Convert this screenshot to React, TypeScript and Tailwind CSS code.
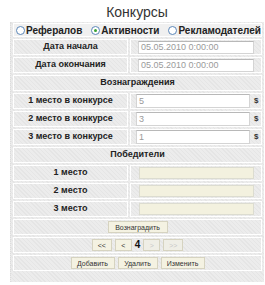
const hatch =
  "bg-[repeating-linear-gradient(45deg,#e5e5e5_0px,#e5e5e5_1px,#ececec_1px,#ececec_3px)]";

function Row({ children }: { children: React.ReactNode }) {
  return <div className="flex gap-[2px] h-[16px]">{children}</div>;
}

function LabelCell({ text }: { text: string }) {
  return (
    <div
      className={`w-[115px] border border-white flex items-center justify-center text-[9px] font-bold text-[#222] ${hatch}`}
    >
      {text}
    </div>
  );
}

function FullCell({ children, className = "" }: { children: React.ReactNode; className?: string }) {
  return (
    <div className={`flex-1 border border-white flex items-center justify-center ${hatch} ${className}`}>
      {children}
    </div>
  );
}

function Radio({ checked, label }: { checked?: boolean; label: string }) {
  return (
    <div className="flex items-center gap-[1px]">
      <span className="w-[9px] h-[9px] rounded-full border border-[#5b87b8] bg-white flex items-center justify-center">
        {checked && <span className="w-[3px] h-[3px] rounded-full bg-[#3aa335]" />}
      </span>
      <span>{label}</span>
    </div>
  );
}

function Btn({ text, w, dim }: { text: string; w: string; dim?: boolean }) {
  return (
    <div
      className={`${w} h-[12px] border border-[#d6d3c0] flex items-center justify-center text-[7px] leading-none ${
        dim ? "text-[#c8c8c8] bg-[#efeee6]" : "text-[#333] bg-[#f4f2e2]"
      }`}
    >
      {text}
    </div>
  );
}

export default function App() {
  return (
    <div className="w-[265px] h-[285px] bg-white font-['Liberation_Sans',Arial,sans-serif]">
      <div className="mt-[4px] h-[17px] leading-[17px] w-[274px] text-center text-[14px] text-[#333]">
        Конкурсы
      </div>
      <div className={`mt-[1px] ml-[10px] w-[254px] px-[2px] pt-[1px] pb-[11px] flex flex-col gap-[2px] border-l border-dotted border-[#dcdcdc] ${hatch}`}>
        <div className="h-[14px] border border-white flex items-center justify-between pl-[2px] pr-0 text-[10px] font-bold text-[#222] bg-[#f0f0f0]">
          <Radio label="Рефералов" />
          <Radio checked label="Активности" />
          <Radio label="Рекламодателей" />
        </div>

        {["Дата начала", "Дата окончания"].map((l) => (
          <Row key={l}>
            <LabelCell text={l} />
            <FullCell className="!justify-start pl-[7px]">
              <div className="w-[116px] h-[13px] bg-white border border-[#d4d4d4] border-t-[#b8b8b8] text-[9px] leading-[11px] text-[#9a9a9a] pl-[2px]">
                05.05.2010 0:00:00
              </div>
            </FullCell>
          </Row>
        ))}

        <Row>
          <FullCell>
            <span className="text-[9px] font-bold text-[#222]">Вознаграждения</span>
          </FullCell>
        </Row>

        {[
          ["1 место в конкурсе", "5"],
          ["2 место в конкурсе", "3"],
          ["3 место в конкурсе", "1"],
        ].map(([l, v]) => (
          <Row key={l}>
            <LabelCell text={l} />
            <FullCell className="!justify-start pl-[5px]">
              <div className="w-[114px] h-[14px] bg-white border border-[#d4d4d4] border-t-[#b8b8b8] text-[9px] leading-[12px] text-[#9a9a9a] pl-[2px]">
                {v}
              </div>
              <span className="ml-[4px] text-[8px] font-bold text-[#333]">$</span>
            </FullCell>
          </Row>
        ))}

        <Row>
          <FullCell>
            <span className="text-[9px] font-bold text-[#222]">Победители</span>
          </FullCell>
        </Row>

        {["1 место", "2 место", "3 место"].map((l) => (
          <Row key={l}>
            <LabelCell text={l} />
            <FullCell className="!justify-start pl-[8px]">
              <div className="w-[115px] h-[12px] bg-[#f3f1df] border border-[#dcdcd0]" />
            </FullCell>
          </Row>
        ))}

        <Row>
          <FullCell>
            <Btn text="Вознаградить" w="w-[60px]" />
          </FullCell>
        </Row>

        <Row>
          <FullCell className="gap-[3px]">
            <Btn text="<<" w="w-[20px]" />
            <Btn text="<" w="w-[17px]" />
            <span className="text-[10px] font-bold text-[#111] leading-none">4</span>
            <Btn text=">" w="w-[17px]" dim />
            <Btn text=">>" w="w-[20px]" dim />
          </FullCell>
        </Row>

        <Row>
          <FullCell className="gap-[3px]">
            <Btn text="Добавить" w="w-[44px]" />
            <Btn text="Удалить" w="w-[40px]" />
            <Btn text="Изменить" w="w-[44px]" />
          </FullCell>
        </Row>
      </div>
    </div>
  );
}
